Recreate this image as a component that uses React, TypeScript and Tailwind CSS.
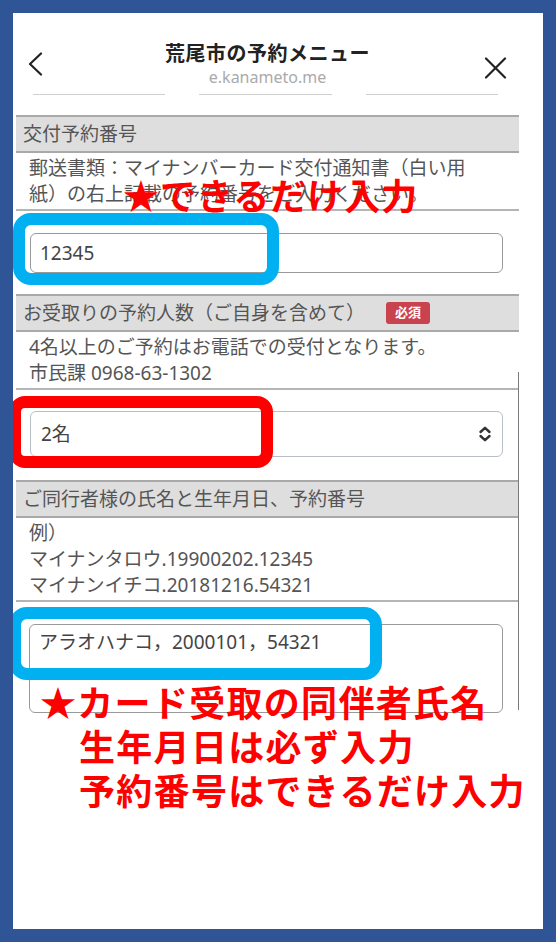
import React from 'react';

const body = { fontFamily: '"Noto Sans", "Noto Sans CJK JP", sans-serif' };
const jp = { fontFamily: '"Noto Sans CJK JP", sans-serif' };

function GrayBar({ title, required }: { title: string; required?: boolean }) {
  return (
    <div className="flex h-[38px] items-center border-y-2 border-[#a9a9a9] bg-[#dedede] pl-[7px] text-[19px] text-[#555]">
      <span>{title}</span>
      {required && (
        <span className="ml-[21px] flex h-[22px] w-[44px] items-center justify-center rounded-[3px] bg-[#c9434f] text-[13px] font-bold text-white">
          必須
        </span>
      )}
    </div>
  );
}

function Desc({ lines }: { lines: string[] }) {
  return (
    <div className="border-b-2 border-[#b5b5b5] py-[2px] pl-[13px] text-[19px] leading-[26px] text-[#555]">
      {lines.map(l => (
        <div key={l}>{l}</div>
      ))}
    </div>
  );
}

export default function App() {
  return (
    <div className="h-[942px] w-[556px] bg-[#2f5597] p-[13px]" style={body}>
      <div className="relative h-full overflow-hidden bg-white">
        <div className="ml-[3px] w-[503px]">
          {/* header */}
          <div className="grid grid-cols-[40px_1fr_40px]">
            <div className="pl-[12px] pt-[39px]">
              <svg width="15" height="24" viewBox="0 0 15 24" fill="none" stroke="#222" strokeWidth="2.2" strokeLinecap="round" strokeLinejoin="round">
                <path d="M13 1.5 2 12l11 10.5" />
              </svg>
            </div>
            <div className="pt-[26px] text-center">
              <div className="text-[20px] font-bold leading-[28px] tracking-[0.5px] text-[#222]" style={jp}>荒尾市の予約メニュー</div>
              <div className="text-[16px] leading-[20px] text-[#aaa]">e.kanameto.me</div>
            </div>
            <div className="pl-[5px] pt-[44px]">
              <svg width="23" height="22" viewBox="0 0 23 22" fill="none" stroke="#222" strokeWidth="2.2" strokeLinecap="round">
                <path d="M2 1.5l19 19M21 1.5l-19 19" />
              </svg>
            </div>
          </div>
          <div className="mb-[20px] mt-[7px] grid grid-cols-3 gap-[34px] pl-[17px] pr-[21px]">
            <div className="h-px bg-[#cfcfcf]" />
            <div className="h-px bg-[#cfcfcf]" />
            <div className="h-px bg-[#cfcfcf]" />
          </div>

          {/* 交付予約番号 */}
          <GrayBar title="交付予約番号" />
          <Desc lines={['郵送書類：マイナンバーカード交付通知書（白い用', '紙）の右上記載の予約番号をご入力ください。']} />
          <div className="pb-[21px] pl-[14px] pr-[16px] pt-[22px]">
            <input
              readOnly
              value="12345"
              className="h-[40px] w-full rounded-[6px] border-[1.5px] border-[#9a9a9a] px-[9px] text-[19px] text-[#444] outline-none"
            />
          </div>

          {/* 予約人数 */}
          <GrayBar title="お受取りの予約人数（ご自身を含めて）" required />
          <Desc lines={['4名以上のご予約はお電話での受付となります。', '市民課 0968-63-1302']} />
          <div className="pb-[23px] pl-[14px] pr-[16px] pt-[21px]">
            <div className="flex h-[46px] items-center justify-between rounded-[6px] border border-[#b9bdc6] pl-[10px] pr-[10px] text-[19px] text-[#444]">
              <span>2名</span>
              <svg width="14" height="16" viewBox="0 0 14 16" fill="none" stroke="#333" strokeWidth="2.4" strokeLinecap="round" strokeLinejoin="round">
                <path d="M2.5 6 7 1.8 11.5 6M2.5 10 7 14.2 11.5 10" />
              </svg>
            </div>
          </div>

          {/* 同行者 */}
          <GrayBar title="ご同行者様の氏名と生年月日、予約番号" />
          <Desc lines={['例）', 'マイナンタロウ.19900202.12345', 'マイナンイチコ.20181216.54321']} />
          <div className="pl-[13px] pr-[16px] pt-[22px]">
            <textarea
              readOnly
              value="アラオハナコ，2000101，54321"
              className="block h-[89px] w-full resize-none rounded-[6px] border-[1.5px] border-[#9a9a9a] px-[9px] pt-[4px] text-[19px] leading-[26px] text-[#444] outline-none"
            />
          </div>
        </div>

        <div className="absolute left-[505px] top-[359px] h-[338px] w-px bg-[#7a7a7a]" />

        {/* annotations */}
        <div className="absolute left-0 top-[200px] h-[72px] w-[266px] rounded-[18px] border-[12px] border-[#00b0f0]" />
        <div className="absolute left-[110px] top-[159px] text-[36px] font-bold leading-[44px] tracking-[1px] text-[#ff0000]" style={jp}>
          ★できるだけ入力
        </div>
        <div className="absolute left-[-4px] top-[383px] h-[72px] w-[264px] rounded-[16px] border-[12px] border-[#ff0000]" />
        <div className="absolute left-[-4px] top-[594px] h-[73px] w-[373px] rounded-[18px] border-[12px] border-[#00b0f0]" />
        <div className="absolute left-[27px] top-[666px] text-[36px] font-bold leading-[44px] tracking-[1.3px] text-[#ff0000]" style={jp}>
          <div>★カード受取の同伴者氏名</div>
          <div className="pl-[39px]">生年月日は必ず入力</div>
          <div className="pl-[39px]">予約番号はできるだけ入力</div>
        </div>
      </div>
    </div>
  );
}
